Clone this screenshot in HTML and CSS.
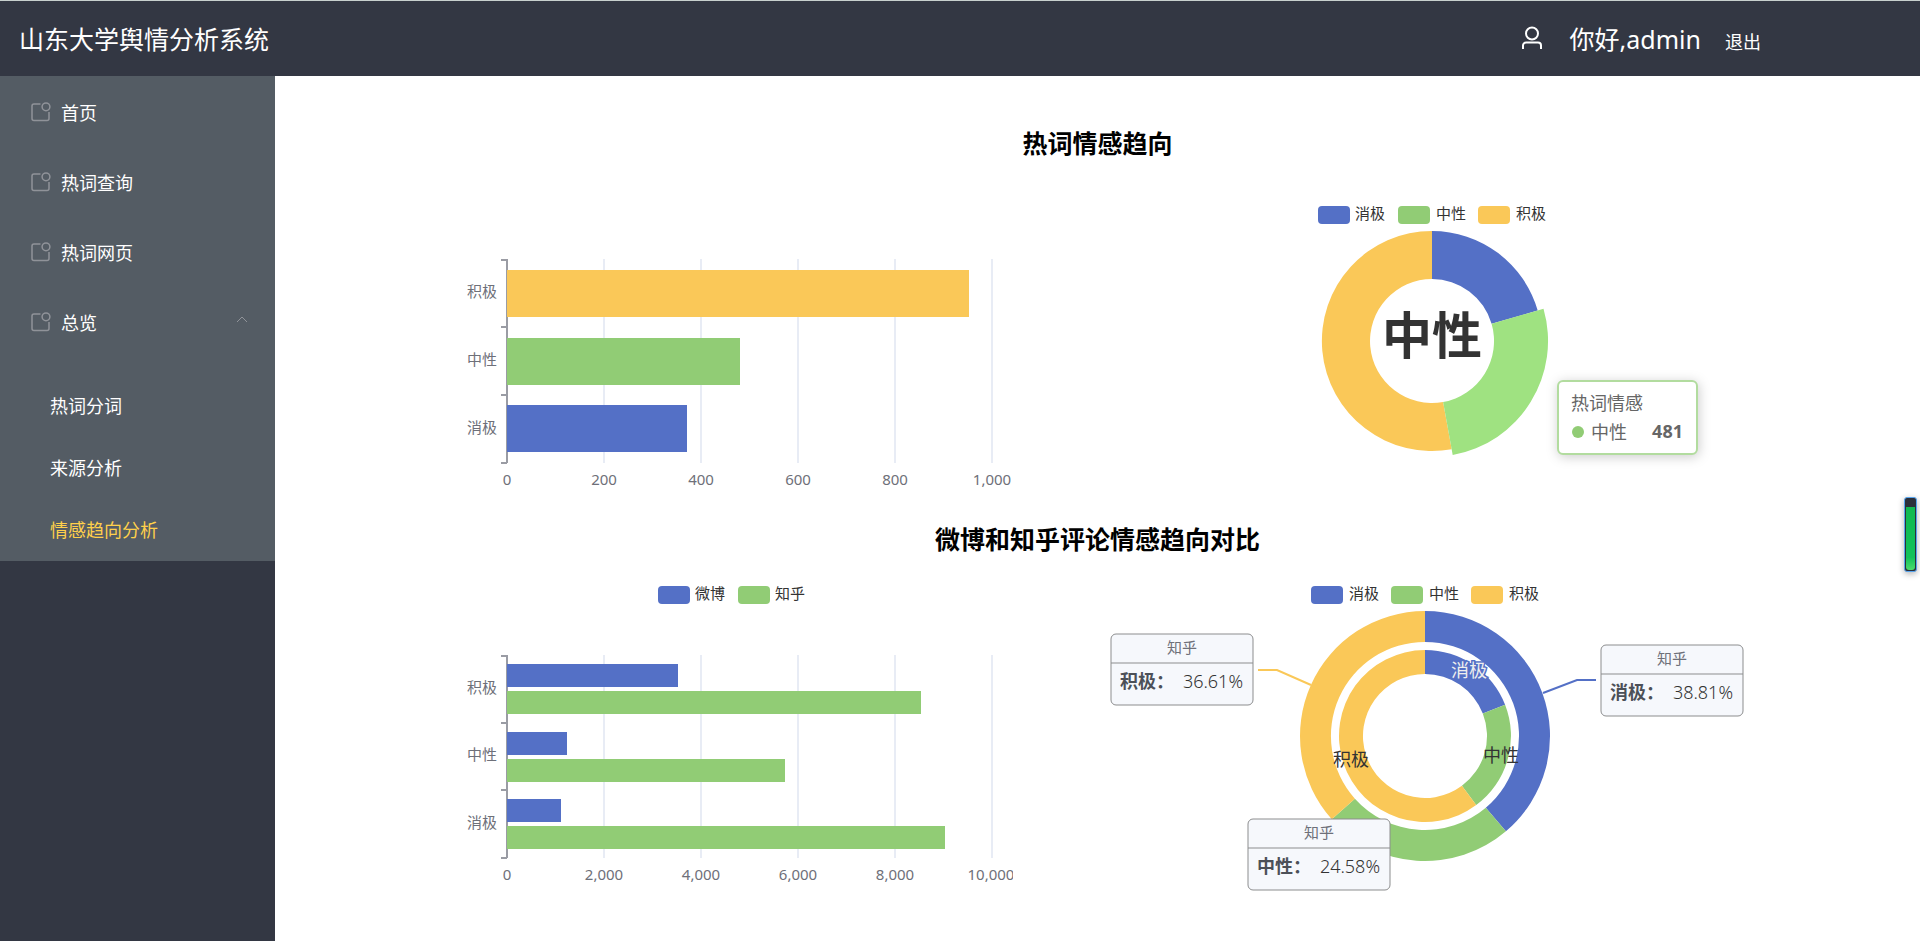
FILE: index.html
```html
<!DOCTYPE html>
<html lang="zh-CN">
<head>
<meta charset="utf-8">
<title>山东大学舆情分析系统</title>
<link rel="stylesheet" href="styles.css">
</head>
<body>
<svg class="defs" width="0" height="0" aria-hidden="true">
  <symbol id="icon-menu" viewBox="0 0 20 20">
    <path d="M9.500 2H3a2 2 0 0 0-2 2v12.500a2 2 0 0 0 2 2h13a2 2 0 0 0 2-2V10"/>
    <circle cx="15" cy="4.800" r="3.900"/>
  </symbol>
</svg>
<header class="topbar">
  <h1 class="brand">山东大学舆情分析系统</h1>
  <div class="user">
    <svg class="user-icon" viewBox="0 0 20 24" aria-hidden="true"><circle cx="10" cy="7.500" r="6"/><path d="M1 23v-3.500a3 3 0 0 1 3-3h12a3 3 0 0 1 3 3V23"/></svg>
    <span class="hello">你好,admin</span>
    <a class="logout" href="#">退出</a>
  </div>
</header>
<div class="layout">
  <aside class="sidebar">
    <nav class="menu">
      <a class="item" href="#"><svg class="item-icon"><use href="#icon-menu"/></svg>首页</a>
      <a class="item" href="#"><svg class="item-icon"><use href="#icon-menu"/></svg>热词查询</a>
      <a class="item" href="#"><svg class="item-icon"><use href="#icon-menu"/></svg>热词网页</a>
      <button class="item" type="button" aria-expanded="true"><svg class="item-icon"><use href="#icon-menu"/></svg>总览<svg class="chevron" viewBox="0 0 12 7"><path d="M1 6l5-5 5 5"/></svg></button>
      <div class="submenu">
        <a class="subitem" href="#">热词分词</a>
        <a class="subitem" href="#">来源分析</a>
        <a class="subitem active" href="#">情感趋向分析</a>
      </div>
    </nav>
  </aside>
  <main class="content">
    <section class="panel">
      <h2 class="panel-title">热词情感趋向</h2>
      <div class="charts">
        <svg class="chart" viewBox="0 0 568 320">
          <path class="grid" d="M159 75V279M256 75V279M353 75V279M450 75V279M547 75V279"/>
          <path class="axis" d="M62 75V279M56 76H62M56 143H62M56 211H62M56 279H62"/>
          <rect class="yellow" x="62" y="86" width="462" height="47"/>
          <rect class="green" x="62" y="154" width="233" height="47"/>
          <rect class="blue" x="62" y="221" width="180" height="47"/>
          <g class="tick end"><text x="52" y="113">积极</text><text x="52" y="181">中性</text><text x="52" y="249">消极</text></g>
          <g class="tick mid"><text x="62" y="301">0</text><text x="159" y="301">200</text><text x="256" y="301">400</text><text x="353" y="301">600</text><text x="450" y="301">800</text><text x="547" y="301">1,000</text></g>
        </svg>
        <svg class="chart" viewBox="0 0 650 320">
          <rect class="blue" x="218" y="22" width="32" height="18" rx="4"/>
          <rect class="green" x="298" y="22" width="32" height="18" rx="4"/>
          <rect class="yellow" x="378" y="22" width="32" height="18" rx="4"/>
          <g class="legend"><text x="255" y="35">消极</text><text x="336" y="35">中性</text><text x="416" y="35">积极</text></g>
          <g transform="translate(0 1)">
            <path class="blue" d="M332 46A110 110 0 0 1 437.700 125.500L391.600 138.800A62 62 0 0 0 332 94Z"/>
            <path class="yellow" d="M351.700 264.200A110 110 0 1 1 332 46V94A62 62 0 1 0 343.100 217Z"/>
            <path class="green-hover" d="M443.500 123.800A116 116 0 0 1 352.700 270.100L343.100 217A62 62 0 0 0 391.600 138.800Z"/>
          </g>
          <text class="center-label" x="332" y="170">中性</text>
          <rect class="tooltip" x="458" y="197" width="139" height="73" rx="5"/>
          <circle class="green" cx="478" cy="248" r="6"/>
          <g class="tip-text"><text x="471" y="226">热词情感</text><text x="491" y="255">中性</text><text class="strong" x="583" y="254">481</text></g>
        </svg>
      </div>
    </section>
    <section class="panel">
      <h2 class="panel-title">微博和知乎评论情感趋向对比</h2>
      <div class="charts">
        <svg class="chart" viewBox="0 0 568 320">
          <rect class="blue" x="213" y="6" width="32" height="18" rx="4"/>
          <rect class="green" x="293" y="6" width="32" height="18" rx="4"/>
          <g class="legend"><text x="250" y="19">微博</text><text x="330" y="19">知乎</text></g>
          <path class="grid" d="M159 75V278M256 75V278M353 75V278M450 75V278M547 75V278"/>
          <path class="axis" d="M62 75V278M56 76H62M56 143H62M56 210H62M56 278H62"/>
          <rect class="blue" x="62" y="84" width="171" height="23"/>
          <rect class="green" x="62" y="111" width="414" height="23"/>
          <rect class="blue" x="62" y="152" width="60" height="23"/>
          <rect class="green" x="62" y="179" width="278" height="23"/>
          <rect class="blue" x="62" y="219" width="54" height="23"/>
          <rect class="green" x="62" y="246" width="438" height="23"/>
          <g class="tick end"><text x="52" y="113">积极</text><text x="52" y="180">中性</text><text x="52" y="248">消极</text></g>
          <g class="tick mid"><text x="62" y="300">0</text><text x="159" y="300">2,000</text><text x="256" y="300">4,000</text><text x="353" y="300">6,000</text><text x="450" y="300">8,000</text><text x="546" y="300">10,000</text></g>
        </svg>
        <svg class="chart" viewBox="0 0 650 320">
          <rect class="blue" x="211" y="6" width="32" height="18" rx="4"/>
          <rect class="green" x="291" y="6" width="32" height="18" rx="4"/>
          <rect class="yellow" x="371" y="6" width="32" height="18" rx="4"/>
          <g class="legend"><text x="249" y="19">消极</text><text x="329" y="19">中性</text><text x="409" y="19">积极</text></g>
          <path class="blue" d="M325 31A125 125 0 0 1 405.900 251.300L385.800 227.700A94 94 0 0 0 325 62Z"/>
          <path class="green" d="M405.900 251.300A125 125 0 0 1 231.800 239.300L254.900 218.700A94 94 0 0 0 385.800 227.700Z"/>
          <path class="yellow" d="M231.800 239.300A125 125 0 0 1 325 31V62A94 94 0 0 0 254.900 218.700Z"/>
          <path class="blue" d="M325 70A86 86 0 0 1 405.100 124.800L382.800 133.500A62 62 0 0 0 325 94Z"/>
          <path class="green" d="M405.100 124.800A86 86 0 0 1 376.200 225.100L361.900 205.800A62 62 0 0 0 382.800 133.500Z"/>
          <path class="yellow" d="M376.200 225.100A86 86 0 1 1 325 70V94A62 62 0 1 0 361.900 205.800Z"/>
          <path class="lead lead-blue" d="M443 113L477 100H496"/>
          <path class="lead lead-yellow" d="M211 105L177 90H158"/>
          <g class="slice-label"><text class="light" x="369" y="97">消极</text><text x="401" y="182">中性</text><text x="251" y="186">积极</text></g>
          <g class="card" transform="translate(11 54)">
            <rect width="142" height="71" rx="5"/><path d="M0 29H142"/>
            <text class="card-title" x="71" y="19">知乎</text><text class="card-name" x="9" y="54">积极：</text><text class="card-value" x="132" y="54">36.61%</text>
          </g>
          <g class="card" transform="translate(148 239)">
            <rect width="142" height="71" rx="5"/><path d="M0 29H142"/>
            <text class="card-title" x="71" y="19">知乎</text><text class="card-name" x="9" y="54">中性：</text><text class="card-value" x="132" y="54">24.58%</text>
          </g>
          <g class="card" transform="translate(501 65)">
            <rect width="142" height="71" rx="5"/><path d="M0 29H142"/>
            <text class="card-title" x="71" y="19">知乎</text><text class="card-name" x="9" y="54">消极：</text><text class="card-value" x="132" y="54">38.81%</text>
          </g>
        </svg>
      </div>
    </section>
  </main>
</div>
<div class="gauge"><div class="gauge-fill"></div></div>
</body>
</html>
```
FILE: styles.css
```css
* { box-sizing: border-box; }
body {
  margin: 0;
  min-height: 100vh;
  display: flex;
  flex-direction: column;
  background: #fff;
  font-family: "Noto Sans", "Noto Sans CJK SC", sans-serif;
}
a { color: inherit; text-decoration: none; }
.defs { position: absolute; }

.topbar {
  display: flex;
  align-items: center;
  justify-content: space-between;
  height: 76px;
  padding: 0 159px 2px 19px;
  border-top: 1px solid #c8d0ce;
  background: #333743;
  color: #fff;
}
.brand { margin: 0; font-size: 25px; font-weight: 400; }
.user { display: flex; align-items: center; }
.user-icon { width: 20px; height: 24px; margin-right: 28px; fill: none; stroke: #fff; stroke-width: 2; }
.hello { margin-right: 24px; font-size: 25px; }
.logout { padding-top: 6px; font-size: 18px; }

.layout { flex: 1; display: flex; }
.sidebar { flex: none; width: 275px; background: #333743; color: #fff; }
.menu { display: flex; flex-direction: column; padding-bottom: 1px; background: #545c64; }
.item {
  display: flex;
  align-items: center;
  height: 70px;
  padding: 2px 27px 0 31px;
  border: 0;
  background: none;
  color: #fff;
  font-family: inherit;
  font-size: 18px;
}
.item-icon { width: 20px; height: 20px; margin-right: 10px; fill: none; stroke: #909399; stroke-width: 1.5px; }
.chevron { width: 12px; height: 7px; margin-left: auto; margin-bottom: 6px; fill: none; stroke: #909399; }
.submenu { padding-top: 18px; }
.subitem { display: flex; align-items: center; height: 62px; padding-left: 50px; font-size: 18px; }
.active { color: #ffd04b; }

.content { flex: 1; min-width: 0; padding: 42px 20px 0; }
.panel { margin-bottom: 10px; }
.panel-title { margin: 0 0 16px; font-size: 25px; line-height: 50px; font-weight: 700; text-align: center; color: #000; }
.charts {
  display: grid;
  grid-template-columns: 568fr 650fr;
  column-gap: 87px;
  max-width: 1305px;
  margin: 0 auto;
}
.chart { display: block; width: 100%; height: auto; overflow: hidden; }

.blue { fill: #5470c6; }
.green { fill: #91cc75; }
.yellow { fill: #fac858; }
.green-hover { fill: #9fe281; }
.grid { fill: none; stroke: #e8ecf5; stroke-width: 2; }
.axis { fill: none; stroke: #9a9ca4; stroke-width: 2; }
.tick { font-size: 15px; fill: #6e7079; }
.end { text-anchor: end; }
.mid { text-anchor: middle; }
.legend { font-size: 15px; fill: #333; }
.center-label { font-size: 50px; font-weight: 700; text-anchor: middle; fill: #333; }
.tooltip { fill: #fff; stroke: #b2dc9f; stroke-width: 2; filter: drop-shadow(1px 2px 6px rgba(0, 0, 0, 0.2)); }
.tip-text { font-size: 18px; fill: #666; }
.strong { font-weight: 700; text-anchor: end; }
.lead { fill: none; stroke-width: 2; }
.lead-blue { stroke: #5470c6; }
.lead-yellow { stroke: #fac858; }
.slice-label { font-size: 18px; text-anchor: middle; fill: #333; }
.light { fill: #eee; stroke: #5470c6; stroke-width: 3; paint-order: stroke; }
.card rect { fill: #f6f8fc; stroke: #8c8d8e; }
.card path { stroke: #8c8d8e; }
.card-title { font-size: 15px; text-anchor: middle; fill: #6e7079; }
.card-name { font-size: 18px; font-weight: 700; fill: #4c5058; }
.card-value { font-size: 18px; font-weight: 300; text-anchor: end; fill: #333; }

.gauge {
  position: fixed;
  right: 3px;
  top: 497px;
  width: 13px;
  height: 75px;
  padding: 9px 1px 1px;
  border: 1px solid #58a6f0;
  border-radius: 3px;
  background: #2b2f3a;
  box-shadow: 0 2px 6px rgba(0, 0, 0, 0.3);
}
.gauge-fill { height: 100%; border-radius: 0 0 3px 3px; background: linear-gradient(#10b950, #12c25a 80%, #4cdc6c); }
```
